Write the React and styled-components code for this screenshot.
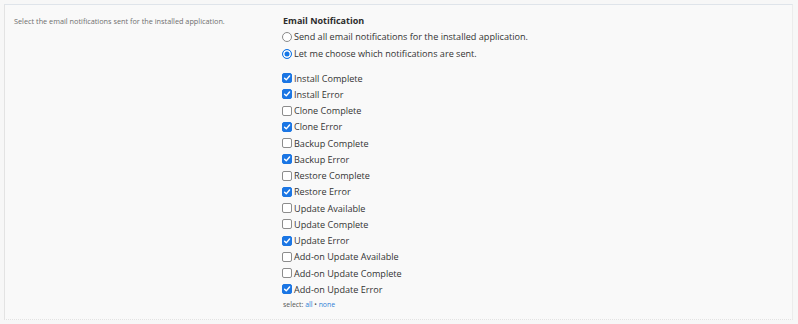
import React, { useState } from "react";
import styled, { createGlobalStyle } from "styled-components";

const GlobalStyle = createGlobalStyle`
  html, body {
    margin: 0;
    padding: 0;
    background: #f2f2f2;
  }
  body {
    font-family: "Open Sans", "Noto Sans", sans-serif;
    color: #333;
  }
`;

const NOTIFICATIONS = [
  { id: "install_complete", label: "Install Complete", on: true },
  { id: "install_error", label: "Install Error", on: true },
  { id: "clone_complete", label: "Clone Complete", on: false },
  { id: "clone_error", label: "Clone Error", on: true },
  { id: "backup_complete", label: "Backup Complete", on: false },
  { id: "backup_error", label: "Backup Error", on: true },
  { id: "restore_complete", label: "Restore Complete", on: false },
  { id: "restore_error", label: "Restore Error", on: true },
  { id: "update_available", label: "Update Available", on: false },
  { id: "update_complete", label: "Update Complete", on: false },
  { id: "update_error", label: "Update Error", on: true },
  { id: "addon_update_available", label: "Add-on Update Available", on: false },
  { id: "addon_update_complete", label: "Add-on Update Complete", on: false },
  { id: "addon_update_error", label: "Add-on Update Error", on: true },
];

const Page = styled.div`
  width: 798px;
  height: 324px;
  padding: 4px 5px 0 4px;
  box-sizing: border-box;
  background: #f7f7f7;
  overflow: hidden;
`;

const Panel = styled.section`
  display: grid;
  grid-template-columns: 277px 1fr;
  height: 316px;
  background: #f9f9f9;
  border-top: 1px solid #dfe4ea;
  border-left: 1px solid #e3e3e3;
  border-right: 1px solid #ececec;
  border-bottom: 1px dotted #e2e2e2;
  box-sizing: border-box;
`;

const Description = styled.p`
  margin: 0;
  padding: 11px 0 0 9px;
  font-size: 7.3px;
  line-height: 10px;
  color: #6f6f6f;
  white-space: nowrap;
`;

const Fields = styled.div`
  display: flex;
  flex-direction: column;
  padding: 10px 0 0 0;
`;

const Heading = styled.h3`
  margin: 0 0 1px 0;
  font-size: 9px;
  line-height: 12px;
  font-weight: 700;
  color: #2d2d2d;
  padding-left: 1px;
`;

const RadioGroup = styled.div`
  display: flex;
  flex-direction: column;
  margin-bottom: 8px;
`;

const CheckList = styled.div`
  display: flex;
  flex-direction: column;
`;

const Option = styled.label`
  display: flex;
  align-items: center;
  gap: 2px;
  height: ${(p) => p.$h}px;
  font-size: 9.1px;
  color: #333;
  cursor: pointer;
  white-space: nowrap;
`;

const Radio = styled.span`
  width: 10px;
  height: 10px;
  border-radius: 50%;
  box-sizing: border-box;
  flex: none;
  border: ${(p) => (p.$on ? "1px solid #1677e6" : "1px solid #8a8a8a")};
  background: ${(p) => (p.$on ? "#1677e6" : "#fff")};
  box-shadow: ${(p) => (p.$on ? "inset 0 0 0 1.5px #fff" : "none")};
`;

const Box = styled.span`
  width: 10px;
  height: 10px;
  border-radius: 2px;
  box-sizing: border-box;
  flex: none;
  display: flex;
  align-items: center;
  justify-content: center;
  background: ${(p) => (p.$on ? "#1b76e4" : "#fff")};
  border: ${(p) => (p.$on ? "1px solid #1b76e4" : "1px solid #8c8c8c")};
`;

const SelectLine = styled.div`
  margin-top: 2px;
  padding-left: 1px;
  font-size: 6.9px;
  line-height: 10px;
  color: #555;
`;

const TextLink = styled.a`
  color: #2f7fd6;
  text-decoration: none;
  cursor: pointer;
`;

const Check = () => (
  <svg width="8" height="8" viewBox="0 0 10 10">
    <path
      d="M2 5.2 L4.1 7.3 L8.2 2.4"
      fill="none"
      stroke="#fff"
      strokeWidth="1.8"
      strokeLinecap="round"
      strokeLinejoin="round"
    />
  </svg>
);

export default function App() {
  const [mode, setMode] = useState("choose");
  const [checked, setChecked] = useState(() =>
    Object.fromEntries(NOTIFICATIONS.map((n) => [n.id, n.on]))
  );

  const toggle = (id) => setChecked((c) => ({ ...c, [id]: !c[id] }));
  const setAll = (value) =>
    setChecked(Object.fromEntries(NOTIFICATIONS.map((n) => [n.id, value])));

  return (
    <>
      <GlobalStyle />
      <Page>
        <Panel>
          <Description>
            Select the email notifications sent for the installed application.
          </Description>
          <Fields>
            <Heading>Email Notification</Heading>
            <RadioGroup>
              <Option $h={17} onClick={() => setMode("all")}>
                <Radio $on={mode === "all"} />
                Send all email notifications for the installed application.
              </Option>
              <Option $h={17} onClick={() => setMode("choose")}>
                <Radio $on={mode === "choose"} />
                Let me choose which notifications are sent.
              </Option>
            </RadioGroup>
            <CheckList>
              {NOTIFICATIONS.map((n) => (
                <Option key={n.id} $h={16.25} onClick={() => toggle(n.id)}>
                  <Box $on={checked[n.id]}>{checked[n.id] && <Check />}</Box>
                  {n.label}
                </Option>
              ))}
            </CheckList>
            <SelectLine>
              select: <TextLink onClick={() => setAll(true)}>all</TextLink> •{" "}
              <TextLink onClick={() => setAll(false)}>none</TextLink>
            </SelectLine>
          </Fields>
        </Panel>
      </Page>
    </>
  );
}
